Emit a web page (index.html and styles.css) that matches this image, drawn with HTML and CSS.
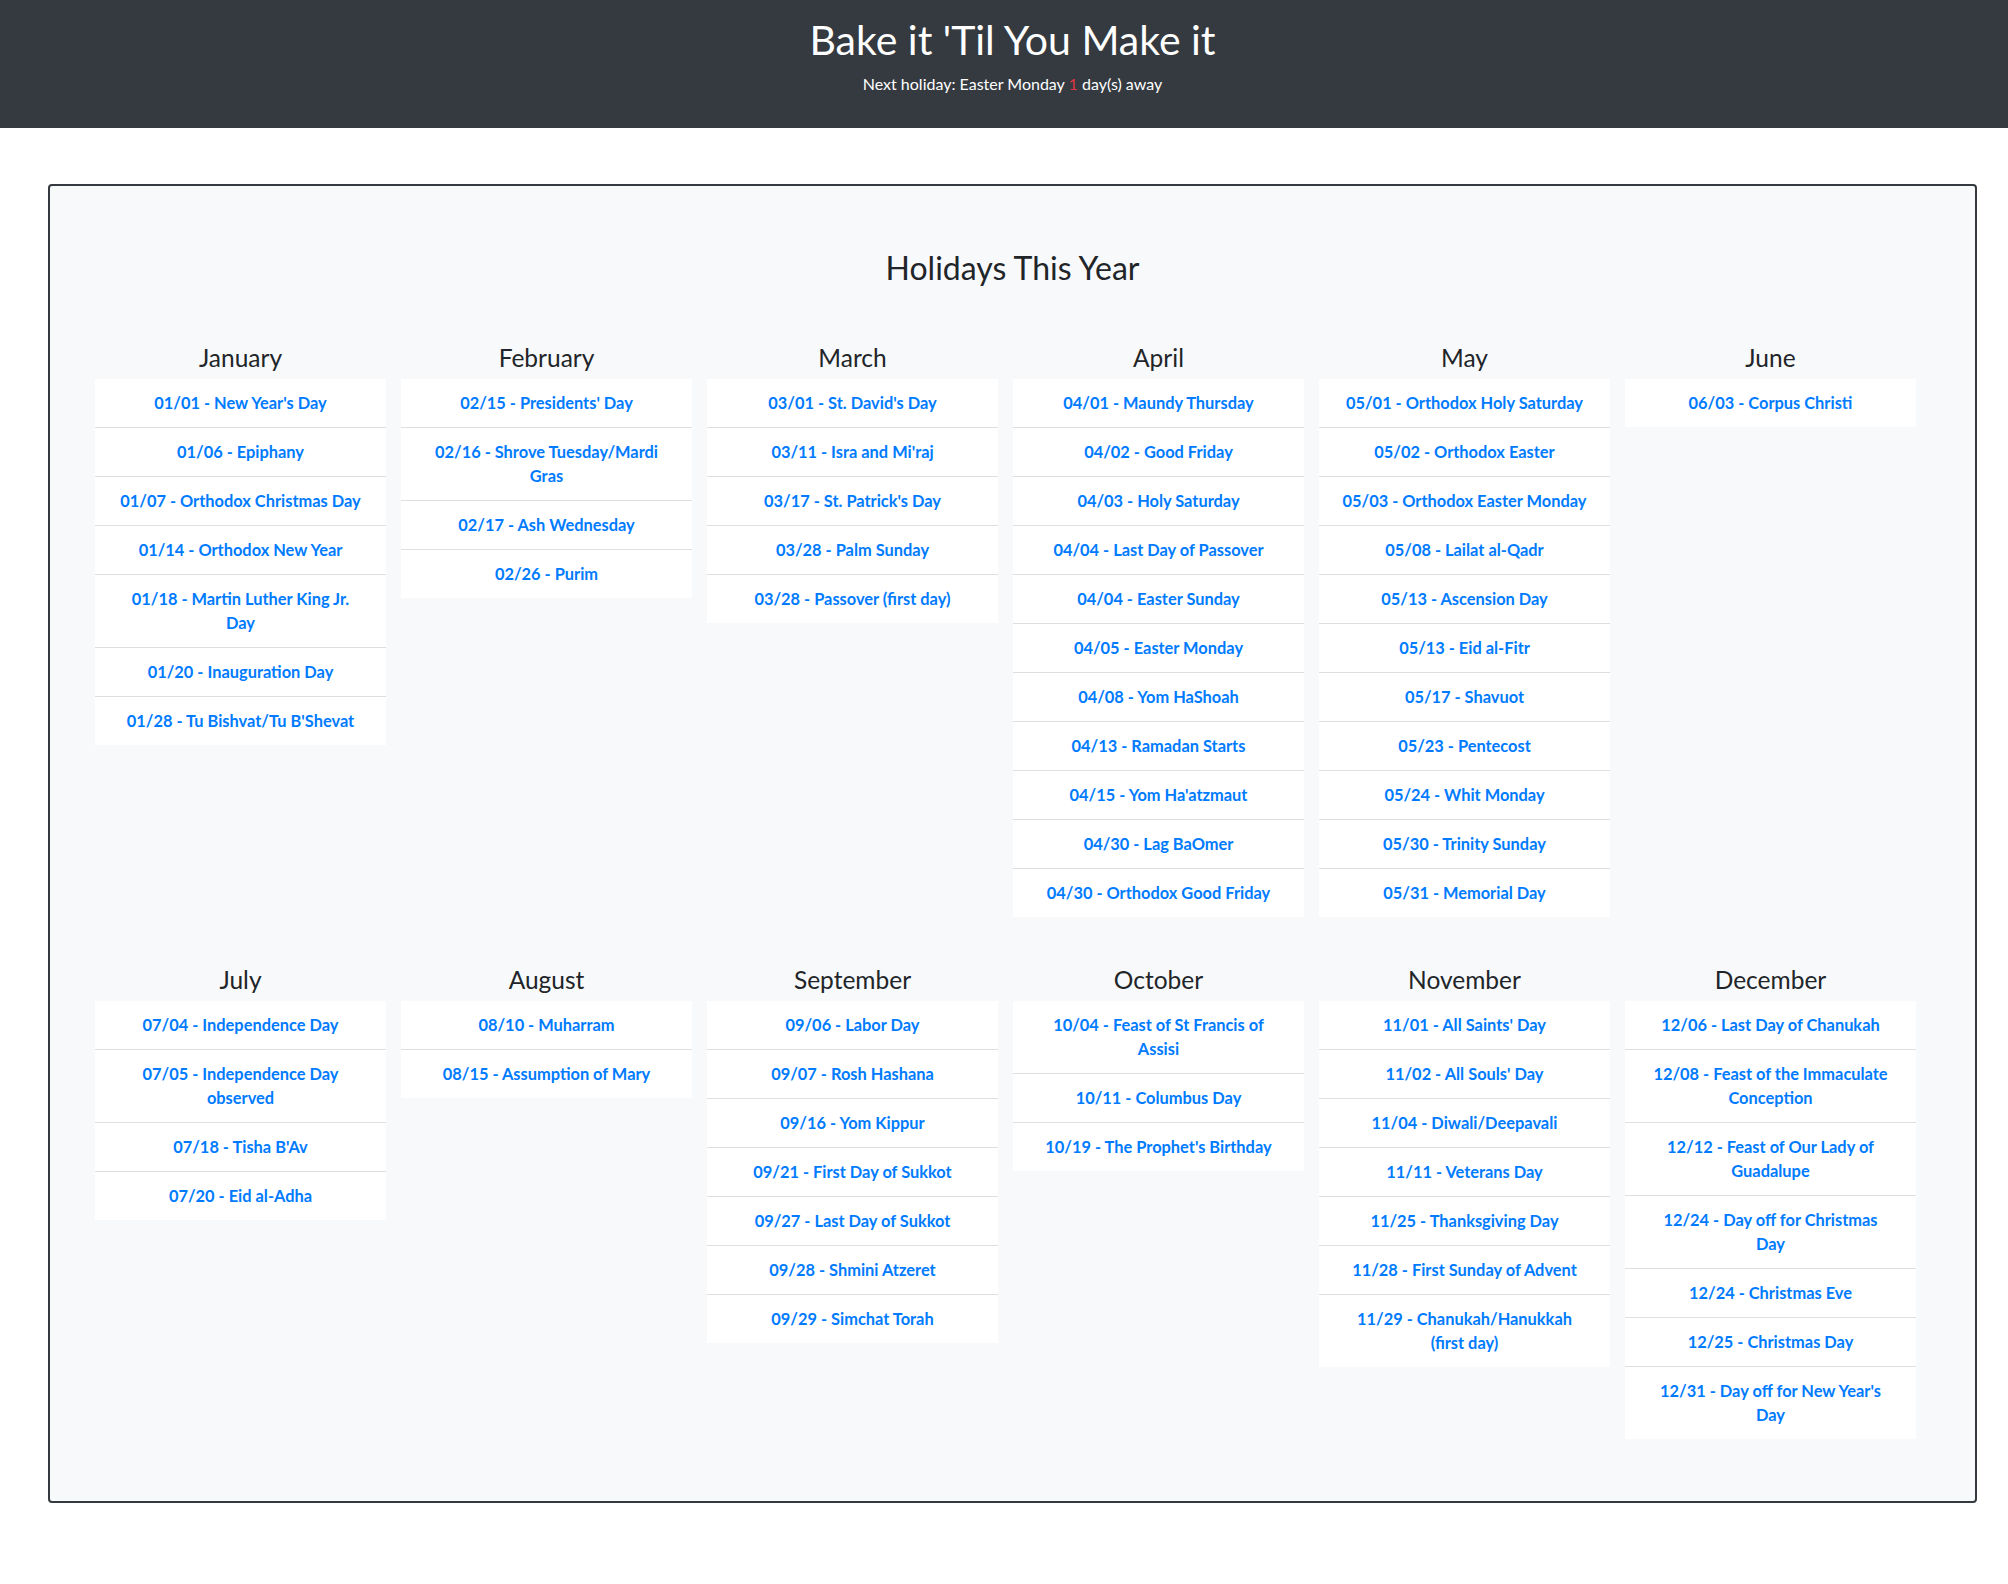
FILE: index.html
```html
<!DOCTYPE html>
<html lang="en">
<head>
<meta charset="utf-8">
<title>Bake it 'Til You Make it</title>
<link rel="stylesheet" href="styles.css">
</head>
<body>
<div class="page">
  <header class="site-header">
    <h1 class="site-title">Bake it 'Til You Make it</h1>
    <p class="next-holiday">Next holiday: Easter Monday <span class="days">1</span> day(s) away</p>
  </header>

  <main class="holidays">
    <h2 class="holidays-title">Holidays This Year</h2>
    <div class="months">
      <section class="month">
        <h4 class="month-name">January</h4>
        <ul class="list">
          <li class="item"><a class="link">01/01 - New Year's Day</a></li>
          <li class="item"><a class="link">01/06 - Epiphany</a></li>
          <li class="item"><a class="link">01/07 - Orthodox Christmas Day</a></li>
          <li class="item"><a class="link">01/14 - Orthodox New Year</a></li>
          <li class="item"><a class="link">01/18 - Martin Luther King Jr.<br>Day</a></li>
          <li class="item"><a class="link">01/20 - Inauguration Day</a></li>
          <li class="item"><a class="link">01/28 - Tu Bishvat/Tu B'Shevat</a></li>
        </ul>
      </section>
      <section class="month">
        <h4 class="month-name">February</h4>
        <ul class="list">
          <li class="item"><a class="link">02/15 - Presidents' Day</a></li>
          <li class="item"><a class="link">02/16 - Shrove Tuesday/Mardi<br>Gras</a></li>
          <li class="item"><a class="link">02/17 - Ash Wednesday</a></li>
          <li class="item"><a class="link">02/26 - Purim</a></li>
        </ul>
      </section>
      <section class="month">
        <h4 class="month-name">March</h4>
        <ul class="list">
          <li class="item"><a class="link">03/01 - St. David's Day</a></li>
          <li class="item"><a class="link">03/11 - Isra and Mi'raj</a></li>
          <li class="item"><a class="link">03/17 - St. Patrick's Day</a></li>
          <li class="item"><a class="link">03/28 - Palm Sunday</a></li>
          <li class="item"><a class="link">03/28 - Passover (first day)</a></li>
        </ul>
      </section>
      <section class="month">
        <h4 class="month-name">April</h4>
        <ul class="list">
          <li class="item"><a class="link">04/01 - Maundy Thursday</a></li>
          <li class="item"><a class="link">04/02 - Good Friday</a></li>
          <li class="item"><a class="link">04/03 - Holy Saturday</a></li>
          <li class="item"><a class="link">04/04 - Last Day of Passover</a></li>
          <li class="item"><a class="link">04/04 - Easter Sunday</a></li>
          <li class="item"><a class="link">04/05 - Easter Monday</a></li>
          <li class="item"><a class="link">04/08 - Yom HaShoah</a></li>
          <li class="item"><a class="link">04/13 - Ramadan Starts</a></li>
          <li class="item"><a class="link">04/15 - Yom Ha'atzmaut</a></li>
          <li class="item"><a class="link">04/30 - Lag BaOmer</a></li>
          <li class="item"><a class="link">04/30 - Orthodox Good Friday</a></li>
        </ul>
      </section>
      <section class="month">
        <h4 class="month-name">May</h4>
        <ul class="list">
          <li class="item"><a class="link">05/01 - Orthodox Holy Saturday</a></li>
          <li class="item"><a class="link">05/02 - Orthodox Easter</a></li>
          <li class="item"><a class="link">05/03 - Orthodox Easter Monday</a></li>
          <li class="item"><a class="link">05/08 - Lailat al-Qadr</a></li>
          <li class="item"><a class="link">05/13 - Ascension Day</a></li>
          <li class="item"><a class="link">05/13 - Eid al-Fitr</a></li>
          <li class="item"><a class="link">05/17 - Shavuot</a></li>
          <li class="item"><a class="link">05/23 - Pentecost</a></li>
          <li class="item"><a class="link">05/24 - Whit Monday</a></li>
          <li class="item"><a class="link">05/30 - Trinity Sunday</a></li>
          <li class="item"><a class="link">05/31 - Memorial Day</a></li>
        </ul>
      </section>
      <section class="month">
        <h4 class="month-name">June</h4>
        <ul class="list">
          <li class="item"><a class="link">06/03 - Corpus Christi</a></li>
        </ul>
      </section>
    </div>

    <div class="months">
      <section class="month">
        <h4 class="month-name">July</h4>
        <ul class="list">
          <li class="item"><a class="link">07/04 - Independence Day</a></li>
          <li class="item"><a class="link">07/05 - Independence Day<br>observed</a></li>
          <li class="item"><a class="link">07/18 - Tisha B'Av</a></li>
          <li class="item"><a class="link">07/20 - Eid al-Adha</a></li>
        </ul>
      </section>
      <section class="month">
        <h4 class="month-name">August</h4>
        <ul class="list">
          <li class="item"><a class="link">08/10 - Muharram</a></li>
          <li class="item"><a class="link">08/15 - Assumption of Mary</a></li>
        </ul>
      </section>
      <section class="month">
        <h4 class="month-name">September</h4>
        <ul class="list">
          <li class="item"><a class="link">09/06 - Labor Day</a></li>
          <li class="item"><a class="link">09/07 - Rosh Hashana</a></li>
          <li class="item"><a class="link">09/16 - Yom Kippur</a></li>
          <li class="item"><a class="link">09/21 - First Day of Sukkot</a></li>
          <li class="item"><a class="link">09/27 - Last Day of Sukkot</a></li>
          <li class="item"><a class="link">09/28 - Shmini Atzeret</a></li>
          <li class="item"><a class="link">09/29 - Simchat Torah</a></li>
        </ul>
      </section>
      <section class="month">
        <h4 class="month-name">October</h4>
        <ul class="list">
          <li class="item"><a class="link">10/04 - Feast of St Francis of<br>Assisi</a></li>
          <li class="item"><a class="link">10/11 - Columbus Day</a></li>
          <li class="item"><a class="link">10/19 - The Prophet's Birthday</a></li>
        </ul>
      </section>
      <section class="month">
        <h4 class="month-name">November</h4>
        <ul class="list">
          <li class="item"><a class="link">11/01 - All Saints' Day</a></li>
          <li class="item"><a class="link">11/02 - All Souls' Day</a></li>
          <li class="item"><a class="link">11/04 - Diwali/Deepavali</a></li>
          <li class="item"><a class="link">11/11 - Veterans Day</a></li>
          <li class="item"><a class="link">11/25 - Thanksgiving Day</a></li>
          <li class="item"><a class="link">11/28 - First Sunday of Advent</a></li>
          <li class="item"><a class="link">11/29 - Chanukah/Hanukkah<br>(first day)</a></li>
        </ul>
      </section>
      <section class="month">
        <h4 class="month-name">December</h4>
        <ul class="list">
          <li class="item"><a class="link">12/06 - Last Day of Chanukah</a></li>
          <li class="item"><a class="link">12/08 - Feast of the Immaculate<br>Conception</a></li>
          <li class="item"><a class="link">12/12 - Feast of Our Lady of<br>Guadalupe</a></li>
          <li class="item"><a class="link">12/24 - Day off for Christmas<br>Day</a></li>
          <li class="item"><a class="link">12/24 - Christmas Eve</a></li>
          <li class="item"><a class="link">12/25 - Christmas Day</a></li>
          <li class="item"><a class="link">12/31 - Day off for New Year's<br>Day</a></li>
        </ul>
      </section>
    </div>
  </main>
</div>
</body>
</html>
```
FILE: styles.css
```css
html {
  overflow: hidden;
}

body {
  margin: 0;
  background: #ffffff;
  font-family: Lato, "Liberation Sans", sans-serif;
  color: #212529;
}

.page {
  width: 2025px;
}

.site-header {
  background: #343a40;
  color: #ffffff;
  text-align: center;
  padding: 15px 0 32px;
}

.site-title {
  margin: 0 0 8px;
  font-size: 41px;
  font-weight: 400;
  line-height: 49px;
}

.next-holiday {
  margin: 0;
  font-size: 16px;
  line-height: 24px;
}

.days {
  color: #dc3545;
}

.holidays {
  margin: 56px 48px 0;
  background: #f8f9fa;
  border: 2px solid #343a40;
  border-radius: 4px;
  padding: 63px 59px 62px 45px;
  display: flex;
  flex-direction: column;
  gap: 48px;
}

.holidays-title {
  margin: 0 0 8px;
  text-align: center;
  font-size: 32px;
  font-weight: 400;
  line-height: 38px;
  padding-left: 14px;
}

.months {
  display: grid;
  grid-template-columns: repeat(6, 291px);
  column-gap: 15px;
  align-items: start;
}

.month-name {
  margin: 0 0 7px;
  text-align: center;
  font-size: 24.5px;
  font-weight: 400;
  line-height: 29px;
}

.list {
  list-style: none;
  margin: 0;
  padding: 0;
  background: #ffffff;
}

.item {
  padding: 12px 20px;
  text-align: center;
  line-height: 24px;
  border-bottom: 1px solid #dfdfdf;
}

.item:last-child {
  border-bottom: 0;
}

.link {
  color: #007bff;
  font-weight: 700;
  font-size: 16.4px;
  text-decoration: none;
}
```
